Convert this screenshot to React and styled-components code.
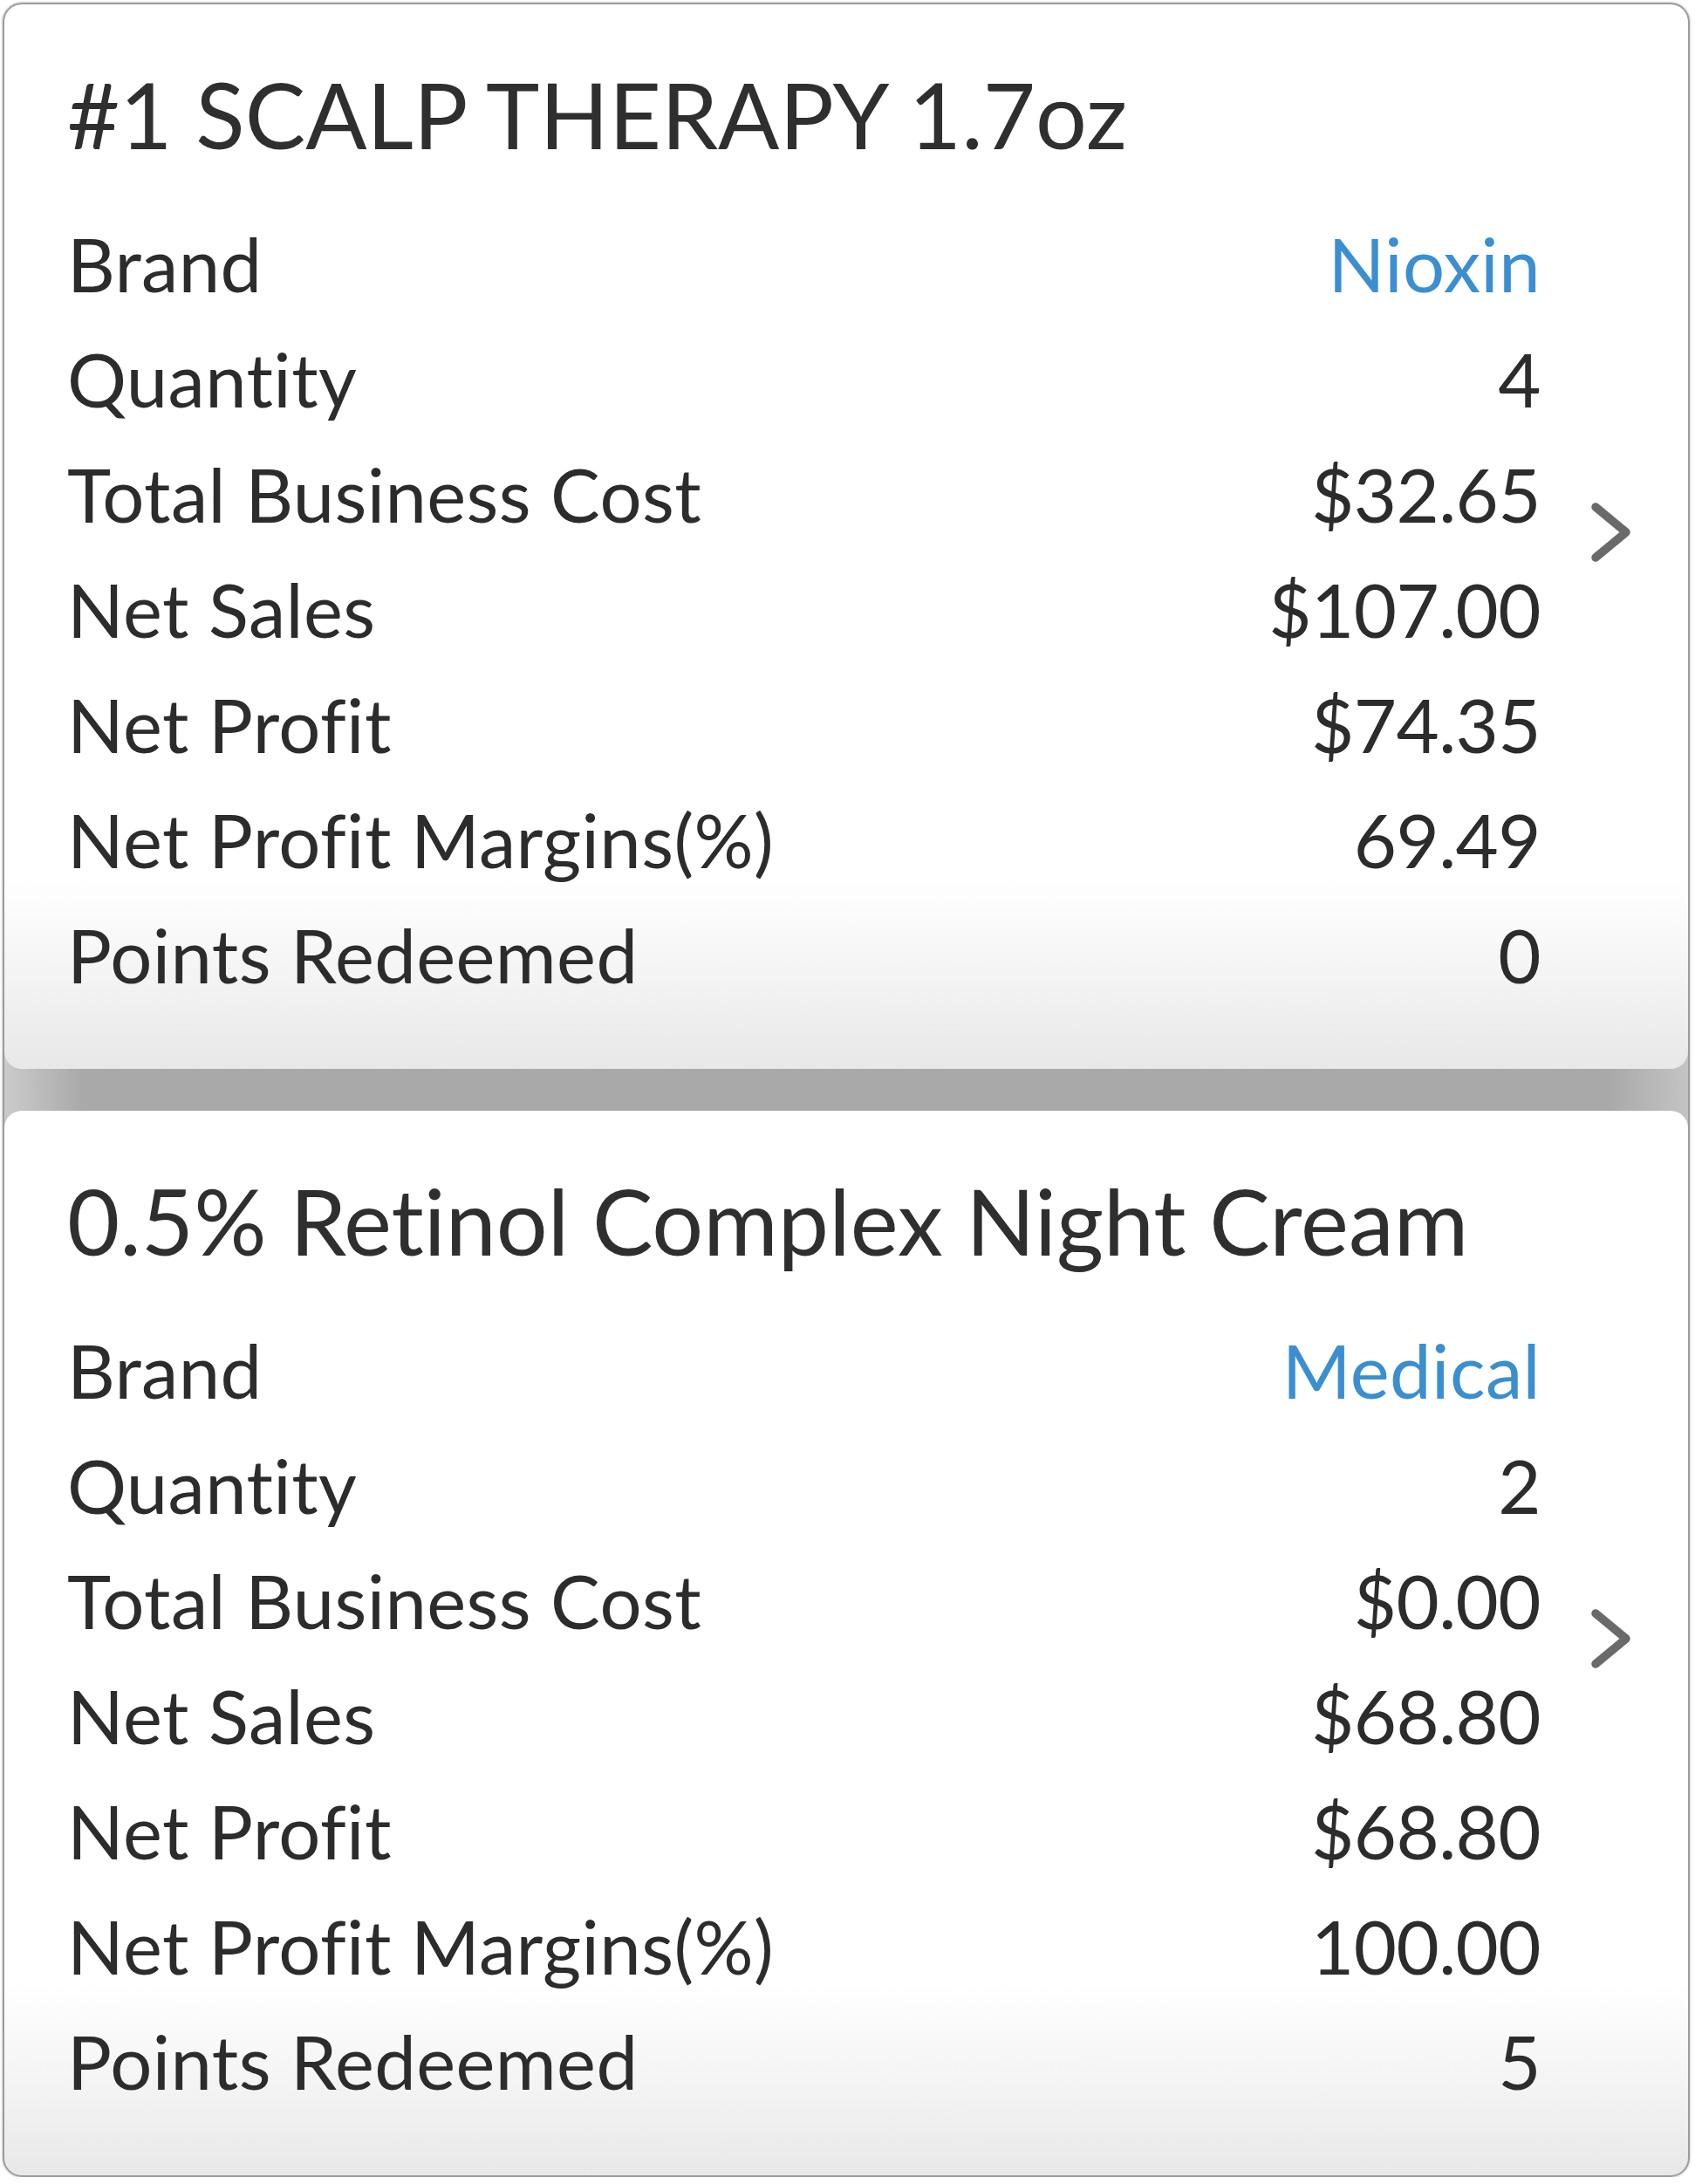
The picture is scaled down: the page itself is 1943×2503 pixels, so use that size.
import React from 'react'
import styled, { createGlobalStyle } from 'styled-components'

const GlobalStyle = createGlobalStyle`
  html, body {
    margin: 0;
    padding: 0;
    background: #ffffff;
  }
  body {
    font-family: Lato, "Open Sans", "Liberation Sans", sans-serif;
    font-variant-ligatures: none;
    color: #333333;
  }
`

const Sheet = styled.div`
  margin: 3px 0 0 3px;
  width: 1934px;
  box-sizing: border-box;
  border: 2px solid #9c9c9c;
  border-radius: 22px;
  background: linear-gradient(to right, #cbcbcb 0, #a9a9a9 90px, #a9a9a9 calc(100% - 90px), #c4c4c4 100%);
  display: flex;
  flex-direction: column;
  gap: 48px;
  overflow: hidden;
  box-shadow: 0 0 3px rgba(0, 0, 0, 0.3);
`

const Card = styled.section`
  display: flex;
  align-items: center;
  border-radius: 20px;
  background: linear-gradient(to bottom, #ffffff 0, #ffffff 82%, #f3f3f3 92%, #e8e8e8 100%);
`

const Body = styled.div`
  flex: 1;
  padding: 56px 0 65px 72px;
`

const Title = styled.h2`
  margin: 0 0 35px;
  font-size: 104px;
  line-height: 140px;
  font-weight: 400;
  color: #2f2f2f;
  white-space: nowrap;
`

const Row = styled.div`
  display: flex;
  justify-content: space-between;
  align-items: baseline;
  height: 132px;
  font-size: 85px;
  line-height: 132px;
  letter-spacing: 0.4px;
`

const Label = styled.span`
  color: #2c2c2c;
`

const Value = styled.span`
  color: ${p => (p.$link ? '#3b8fd1' : '#2c2c2c')};
  letter-spacing: ${p => (p.$link ? '0.4px' : '-0.6px')};
`

const Accessory = styled.div`
  width: 169px;
  display: flex;
  justify-content: flex-start;
  padding-left: 56px;
  box-sizing: border-box;
  margin-top: -10px;
`

const Chevron = () => (
  <svg width="50" height="72" viewBox="0 0 50 72" fill="none">
    <polyline
      points="7,7 42,36 7,65"
      stroke="#6a6a6a"
      strokeWidth="9.5"
      strokeLinecap="round"
      strokeLinejoin="round"
    />
  </svg>
)

const products = [
  {
    name: '#1 SCALP THERAPY 1.7oz',
    brand: 'Nioxin',
    quantity: '4',
    cost: '$32.65',
    sales: '$107.00',
    profit: '$74.35',
    margin: '69.49',
    points: '0',
  },
  {
    name: '0.5% Retinol Complex Night Cream',
    brand: 'Medical',
    quantity: '2',
    cost: '$0.00',
    sales: '$68.80',
    profit: '$68.80',
    margin: '100.00',
    points: '5',
  },
]

const ProductCard = ({ product }) => (
  <Card>
    <Body>
      <Title>{product.name}</Title>
      <Row>
        <Label>Brand</Label>
        <Value $link>{product.brand}</Value>
      </Row>
      <Row>
        <Label>Quantity</Label>
        <Value>{product.quantity}</Value>
      </Row>
      <Row>
        <Label>Total Business Cost</Label>
        <Value>{product.cost}</Value>
      </Row>
      <Row>
        <Label>Net Sales</Label>
        <Value>{product.sales}</Value>
      </Row>
      <Row>
        <Label>Net Profit</Label>
        <Value>{product.profit}</Value>
      </Row>
      <Row>
        <Label>Net Profit Margins(%)</Label>
        <Value>{product.margin}</Value>
      </Row>
      <Row>
        <Label>Points Redeemed</Label>
        <Value>{product.points}</Value>
      </Row>
    </Body>
    <Accessory>
      <Chevron />
    </Accessory>
  </Card>
)

export default function App() {
  return (
    <>
      <GlobalStyle />
      <Sheet>
        {products.map(p => (
          <ProductCard key={p.name} product={p} />
        ))}
      </Sheet>
    </>
  )
}
